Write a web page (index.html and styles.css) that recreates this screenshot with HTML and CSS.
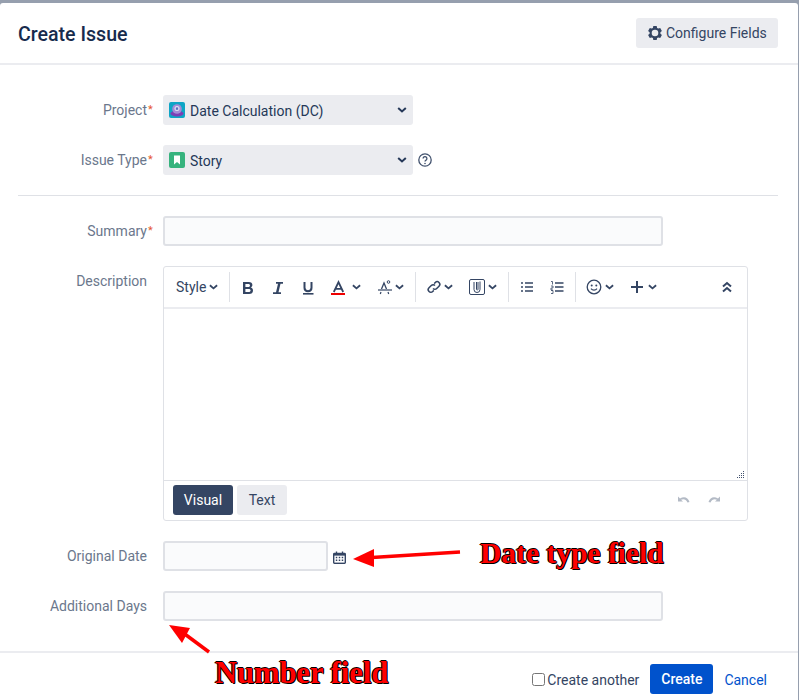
FILE: index.html
```html
<!DOCTYPE html>
<html lang="en">
<head>
<meta charset="utf-8">
<title>Create Issue</title>
<link rel="stylesheet" href="styles.css">
</head>
<body>
<div class="dialog">
  <header class="head">
    <h2 class="title">Create Issue</h2>
    <button class="config">
      <svg class="gear" viewBox="0 0 16 16" width="16" height="16"><path fill="#344563" fill-rule="evenodd" d="M6.300 1h3.400l.4 1.900 1.200.7 1.900-.6 1.700 3-1.500 1.300v1.400l1.500 1.300-1.700 3-1.900-.6-1.200.7-.4 1.900H6.300l-.4-1.900-1.200-.7-1.900.6-1.700-3 1.500-1.300V7.300L1.100 6l1.700-3 1.900.6 1.200-.7zM8 4.700a3.300 3.300 0 1 0 0 6.600 3.300 3.300 0 0 0 0-6.600z"/></svg>
      Configure Fields
    </button>
  </header>

  <div class="body">
    <div class="row r-project">
      <label class="lab">Project<span class="req">*</span></label>
      <div class="select">
        <svg class="ico" viewBox="0 0 16 16" width="16" height="16"><rect width="16" height="16" rx="2" fill="#0ea5c6"/><ellipse cx="8" cy="11.500" rx="6.500" ry="3" fill="#7b3fb5"/><circle cx="8" cy="7" r="4.800" fill="#a58bd8"/><circle cx="8" cy="6.500" r="2.500" fill="#dfe6f5"/><rect x="6.800" y="5.400" width="2.400" height="2.400" fill="#5c6bc0"/></svg>
        <span class="val">Date Calculation (DC)</span>
        <svg class="chev" viewBox="0 0 10 6" width="10" height="6"><path d="M1.200 1 5 4.500 8.800 1" fill="none" stroke="#253858" stroke-width="2"/></svg>
      </div>
    </div>
    <div class="row r-type">
      <label class="lab">Issue Type<span class="req">*</span></label>
      <div class="select">
        <svg class="ico" viewBox="0 0 16 16" width="16" height="16"><rect width="16" height="16" rx="2" fill="#36b37e"/><path d="M5 3.500h6v9L8 10l-3 2.500z" fill="#fff"/></svg>
        <span class="val">Story</span>
        <svg class="chev" viewBox="0 0 10 6" width="10" height="6"><path d="M1.200 1 5 4.500 8.800 1" fill="none" stroke="#253858" stroke-width="2"/></svg>
      </div>
      <svg class="help" viewBox="0 0 14 14" width="14" height="14"><circle cx="7" cy="7" r="6.200" fill="none" stroke="#42526e" stroke-width="1.300"/><path d="M5.100 5.500a1.900 1.900 0 1 1 2.900 1.600c-.7.400-1 .8-1 1.500" fill="none" stroke="#42526e" stroke-width="1.300"/><circle cx="7" cy="10.500" r=".8" fill="#42526e"/></svg>
    </div>
    <hr class="rule">
    <div class="row r-summary">
      <label class="lab">Summary<span class="req">*</span></label>
      <input class="field wide" type="text">
    </div>
    <div class="row r-desc">
      <label class="lab lab-top">Description</label>
      <div class="editor">
        <div class="toolbar">
          <div class="group g-style"><span class="style">Style</span><svg class="tchev" viewBox="0 0 10 6" width="9" height="6"><path d="M1 1l4 3.500L9 1" fill="none" stroke="#344563" stroke-width="2"/></svg></div>
          <div class="group g-format">
            <svg viewBox="0 0 16 16" width="16" height="16"><path fill-rule="evenodd" d="M3 3h5.800c2.300 0 3.600 1.200 3.600 3 0 1.200-.7 2.100-1.700 2.500 1.400.3 2.300 1.400 2.300 2.900 0 2.200-1.500 3.600-3.900 3.600H3zM5.400 5v3h3c1 0 1.600-.6 1.600-1.500S9.400 5 8.400 5zM5.400 10v3h3.300c1.200 0 1.900-.6 1.900-1.500s-.7-1.500-1.900-1.500z" fill="#344563"/></svg>
            <svg viewBox="0 0 16 16" width="16" height="16"><path d="M6 3h7v1.800h-2.500L8.500 13.200H11V15H3v-1.800h3L8 4.800H6z" fill="#344563"/></svg>
            <svg viewBox="0 0 16 16" width="16" height="16"><path d="M4.500 3v5.800c0 2.200 1.300 3.400 3.500 3.400s3.500-1.200 3.500-3.400V3" fill="none" stroke="#344563" stroke-width="2"/><rect x="3" y="14" width="10.500" height="1.600" fill="#344563"/></svg>
            <span class="colorbtn gap-a">
              <svg viewBox="0 0 16 16" width="16" height="16"><path d="M3.800 13 8.500 3l4.700 10M5.500 9.800h6" fill="none" stroke="#344563" stroke-width="1.800"/><rect x="1" y="14" width="14" height="2" fill="#e00"/></svg>
              <svg class="tchev" viewBox="0 0 10 6" width="9" height="6"><path d="M1 1l4 3.500L9 1" fill="none" stroke="#344563" stroke-width="2"/></svg>
            </span>
            <span class="colorbtn push">
              <svg viewBox="0 0 16 16" width="16" height="16"><path d="M4.500 10 7 4l2.500 6" fill="none" stroke="#344563" stroke-width="1.300"/><circle cx="11.500" cy="3" r="1.300" fill="none" stroke="#344563"/><path d="M1 11h14" stroke="#344563" stroke-width="1.200"/><path d="M4 13l-.7 2M11 13l.7 2" stroke="#344563" stroke-width="1.200"/></svg>
              <svg class="tchev" viewBox="0 0 10 6" width="9" height="6"><path d="M1 1l4 3.500L9 1" fill="none" stroke="#344563" stroke-width="2"/></svg>
            </span>
          </div>
          <div class="group g-insert">
            <span class="colorbtn">
              <svg viewBox="0 0 16 16" width="16" height="16"><path d="M7 9.500a2.600 2.600 0 0 0 3.700 0l2.300-2.300A2.600 2.600 0 0 0 9.300 3.500L8.200 4.600M9 6.500a2.600 2.600 0 0 0-3.700 0L3 8.800a2.600 2.600 0 0 0 3.700 3.700l1.100-1.100" fill="none" stroke="#344563" stroke-width="1.500"/></svg>
              <svg class="tchev" viewBox="0 0 10 6" width="9" height="6"><path d="M1 1l4 3.500L9 1" fill="none" stroke="#344563" stroke-width="2"/></svg>
            </span>
            <span class="colorbtn wide-chev">
              <svg viewBox="0 0 16 16" width="16" height="16"><rect x=".5" y=".5" width="15" height="15" rx="1.500" fill="none" stroke="#344563"/><path d="M5 3v7.500a3 3 0 0 0 6 0V2.500M7.500 3v7.500a.8.800 0 0 0 1.500 0V3" fill="none" stroke="#344563"/></svg>
              <svg class="tchev" viewBox="0 0 10 6" width="9" height="6"><path d="M1 1l4 3.500L9 1" fill="none" stroke="#344563" stroke-width="2"/></svg>
            </span>
          </div>
          <div class="group g-lists">
            <svg viewBox="0 0 16 16" width="16" height="16"><path d="M6 4h8M6 8h8M6 12h8" stroke="#344563" stroke-width="1.600"/><path d="M2 4h2M2 8h2M2 12h2" stroke="#344563" stroke-width="1.600"/></svg>
            <svg viewBox="0 0 16 16" width="16" height="16"><path d="M6 4h8.500M6 8h8.500M6 12h8.500" stroke="#344563" stroke-width="1.600"/><path d="M2 2.500h1.500v3M2 7h2v2H2v2h2M2 11.500h2v3H2" fill="none" stroke="#344563" stroke-width=".8"/></svg>
          </div>
          <div class="group g-more">
            <span class="colorbtn wide-chev">
              <svg viewBox="0 0 16 16" width="16" height="16"><circle cx="8" cy="8" r="6.800" fill="none" stroke="#344563" stroke-width="1.300"/><circle cx="5.700" cy="6.500" r="1" fill="#344563"/><circle cx="10.300" cy="6.500" r="1" fill="#344563"/><path d="M5 9.700c1.500 2 4.500 2 6 0" fill="none" stroke="#344563" stroke-width="1.200"/></svg>
              <svg class="tchev" viewBox="0 0 10 6" width="9" height="6"><path d="M1 1l4 3.500L9 1" fill="none" stroke="#344563" stroke-width="2"/></svg>
            </span>
            <span class="colorbtn wide-chev">
              <svg viewBox="0 0 16 16" width="16" height="16"><path d="M8 2v12M2 8h12" stroke="#344563" stroke-width="2"/></svg>
              <svg class="tchev" viewBox="0 0 10 6" width="9" height="6"><path d="M1 1l4 3.500L9 1" fill="none" stroke="#344563" stroke-width="2"/></svg>
            </span>
          </div>
          <svg class="collapse" viewBox="0 0 10 12" width="10" height="12"><path d="M1 5.500l4-3.500 4 3.500M1 10.500l4-3.500 4 3.500" fill="none" stroke="#344563" stroke-width="2"/></svg>
        </div>
        <div class="area">
          <svg class="grip" viewBox="0 0 9 9" width="9" height="9"><g fill="#42526e"><rect x="7" y="1" width="1" height="1"/><rect x="5" y="3" width="1" height="1"/><rect x="7" y="3" width="1" height="1"/><rect x="3" y="5" width="1" height="1"/><rect x="5" y="5" width="1" height="1"/><rect x="7" y="5" width="1" height="1"/><rect x="1" y="7" width="1" height="1"/><rect x="3" y="7" width="1" height="1"/><rect x="5" y="7" width="1" height="1"/><rect x="7" y="7" width="1" height="1"/></g></svg>
        </div>
        <div class="modes">
          <button class="mode on">Visual</button>
          <button class="mode">Text</button>
          <div class="history">
            <svg viewBox="0 0 16 10" width="16" height="10"><path d="M2 1.500v5h5L5 4.800c2.500-1.200 5-.6 6.500 2.700l2-.6C12 2.300 8 .9 4 3.500z" fill="#b3bac5"/></svg>
            <svg viewBox="0 0 16 10" width="16" height="10"><path d="M14 1.500v5H9l2-1.700C8.500 3.600 6 4.200 4.500 7.500l-2-.6C4 2.300 8 .9 12 3.500z" fill="#b3bac5"/></svg>
          </div>
        </div>
      </div>
    </div>
    <div class="row r-date">
      <label class="lab">Original Date</label>
      <input class="field short" type="text">
      <svg class="cal" viewBox="0 0 14 14" width="13" height="13"><path fill="#344563" d="M3 .5h1.500V2h5V.5H11V2h1.500A1.500 1.500 0 0 1 14 3.500v9a1.500 1.500 0 0 1-1.500 1.500h-11A1.500 1.500 0 0 1 0 12.500v-9A1.500 1.500 0 0 1 1.500 2H3z"/><path fill="#fff" d="M1.500 5h11v7.500h-11z"/><path fill="#344563" d="M3 6.200h1.600v1.600H3zM6.200 6.200h1.600v1.600H6.200zM9.400 6.200H11v1.600H9.400zM3 9.200h1.600v1.600H3zM6.200 9.200h1.600v1.600H6.200zM9.400 9.200H11v1.600H9.400z"/></svg>
    </div>
    <div class="row r-days">
      <label class="lab">Additional Days</label>
      <input class="field wide" type="text">
    </div>
  </div>

  <footer class="foot">
    <label class="another"><input class="check" type="checkbox">Create another</label>
    <button class="create">Create</button>
    <a class="cancel">Cancel</a>
  </footer>
</div>

<svg class="arrows" viewBox="0 0 799 700" width="799" height="700">
  <path d="M460 552 372 557.500" stroke="#f00" stroke-width="3.500" fill="none"/>
  <path d="M353 559 374 549 374 567z" fill="#f00"/>
  <path d="M209 652 182 632" stroke="#f00" stroke-width="3.500" fill="none"/>
  <path d="M169 625 190 628 182 643z" fill="#f00"/>
</svg>
<div class="note note-date">Date type field</div>
<div class="note note-number">Number field</div>
</body>
</html>
```

FILE: styles.css
```css
* { box-sizing: border-box; }
html, body { margin: 0; padding: 0; }
body {
  width: 799px;
  height: 700px;
  overflow: hidden;
  position: relative;
  background: #969fae;
  padding-top: 3px;
  font-family: Roboto, "Liberation Sans", sans-serif;
  font-size: 14px;
  color: #253858;
}
.dialog {
  width: 798px;
  height: 697px;
  background: #fff;
  border-radius: 3px 3px 0 0;
  display: flex;
  flex-direction: column;
}
.head {
  height: 62px;
  border-bottom: 2px solid #ebecf0;
  display: flex;
  align-items: center;
  justify-content: space-between;
  padding: 0 20px 0 18px;
  flex: none;
}
.title {
  margin: 4px 0 0;
  font-size: 19.6px;
  font-weight: 500;
  color: #172b4d;
  line-height: 24px;
}
.config {
  width: 142px;
  height: 30px;
  border: 0;
  border-radius: 3px;
  background: #ebecf0;
  color: #344563;
  font: 14px Roboto, sans-serif;
  display: flex;
  align-items: center;
  gap: 3px;
  padding: 0 0 0 11px;
}
.body { flex: 1; padding: 30px 20px 0 0; position: relative; }
.row { display: flex; align-items: center; }
.lab {
  width: 147px;
  text-align: right;
  color: #6b778c;
  position: relative;
  flex: none;
  margin-right: 16px;
  line-height: 20px;
}
.req {
  color: #e5562f;
  font-size: 11px;
  position: absolute;
  left: 100%;
  top: 0;
  width: 6px;
  padding-left: 1px;
  text-align: left;
}
.lab-top { align-self: flex-start; top: 5px; }
.r-type { margin-top: 20px; }
.select {
  width: 250px;
  height: 30px;
  background: #ebecf0;
  border-radius: 3px;
  display: flex;
  align-items: center;
  padding: 0 6px;
  position: relative;
  font-size: 14px;
}
.ico { flex: none; }
.val { margin-left: 5px; flex: 1; position: relative; top: 1px; color: #253858; }
.help { margin-left: 5px; }
.rule {
  border: 0;
  height: 1px;
  background: #dfe1e6;
  margin: 20px 0 0 18px;
  width: 760px;
}
.r-summary { margin-top: 20px; }
.field {
  height: 30px;
  background: #fafbfc;
  border: 2px solid #dfe1e6;
  border-radius: 3px;
  padding: 0 6px;
  flex: none;
}
.wide { width: 500px; }
.short { width: 165px; }
.r-desc { margin-top: 20px; align-items: flex-start; }
.editor {
  width: 585px;
  height: 255px;
  border: 1px solid #dfe1e6;
  border-radius: 3px;
  display: flex;
  flex-direction: column;
}
.toolbar {
  height: 42px;
  border-bottom: 2px solid #ebecf0;
  display: flex;
  align-items: center;
  flex: none;
  position: relative;
  padding-right: 12px;
}
.group {
  height: 30px;
  display: flex;
  align-items: center;
  border-right: 1px solid #dfe1e6;
  flex: none;
}
.group svg { flex: none; }
.g-style { width: 66px; padding-left: 12px; gap: 3px; color: #344563; }
.g-format { width: 186px; padding-left: 10px; gap: 14px; }
.g-insert { width: 93px; padding-left: 10px; gap: 16px; }
.g-lists { width: 67px; padding-left: 10px; gap: 14px; }
.g-more { border-right: 0; padding-left: 10px; gap: 15px; }
.colorbtn { display: flex; align-items: center; gap: 2px; }
.gap-a { gap: 6px; }
.push { margin-left: 2px; }
.wide-chev { gap: 3px; }
.collapse { margin-left: auto; margin-right: 3px; }
.area { flex: 1; position: relative; }
.grip { position: absolute; right: 2px; bottom: 1px; }
.modes {
  height: 40px;
  border-top: 1px solid #dfe1e6;
  display: flex;
  align-items: center;
  padding: 0 25px 2px 9px;
  gap: 4px;
  flex: none;
}
.mode {
  height: 30px;
  border: 0;
  border-radius: 3px;
  background: #ebecf0;
  color: #344563;
  font: 14px Roboto, sans-serif;
  width: 50px;
  padding: 0;
}
.mode.on { background: #344563; color: #fff; width: 60px; }
.history { margin-left: auto; display: flex; gap: 14px; align-items: center; }
.r-date { margin-top: 20px; }
.cal { margin-left: 5px; margin-top: 3px; }
.r-days { margin-top: 20px; }
.foot {
  height: 49px;
  margin-top: auto;
  border-top: 2px solid #ebecf0;
  flex: none;
  display: flex;
  align-items: flex-end;
  justify-content: flex-end;
  padding: 0 31px 6px 0;
}
.another { display: flex; align-items: center; color: #344563; height: 30px; margin-right: 11px; position: relative; top: 1px; }
.check { width: 13px; height: 13px; margin: 0 2px 0 0; position: relative; top: -1px; }
.create {
  width: 63px;
  height: 30px;
  border: 0;
  border-radius: 3px;
  background: #0052cc;
  color: #fff;
  font: 500 14px Roboto, sans-serif;
  padding: 0;
}
.cancel { color: #0052cc; margin-left: 11px; height: 30px; line-height: 33px; }
.arrows { position: absolute; left: 0; top: 0; pointer-events: none; }
.note {
  position: absolute;
  font-family: "Liberation Serif", serif;
  font-weight: 700;
  font-size: 29.500px;
  line-height: 30px;
  color: #f00;
  white-space: nowrap;
  text-shadow: 1px 1px 0 #000, -1px 0 0 #000, 0 -1px 0 #000, 1px 0 0 #000;
}
.note-date { left: 480px; top: 538px; }
.note-number { left: 215px; top: 658px; font-size: 30.500px; }
```
